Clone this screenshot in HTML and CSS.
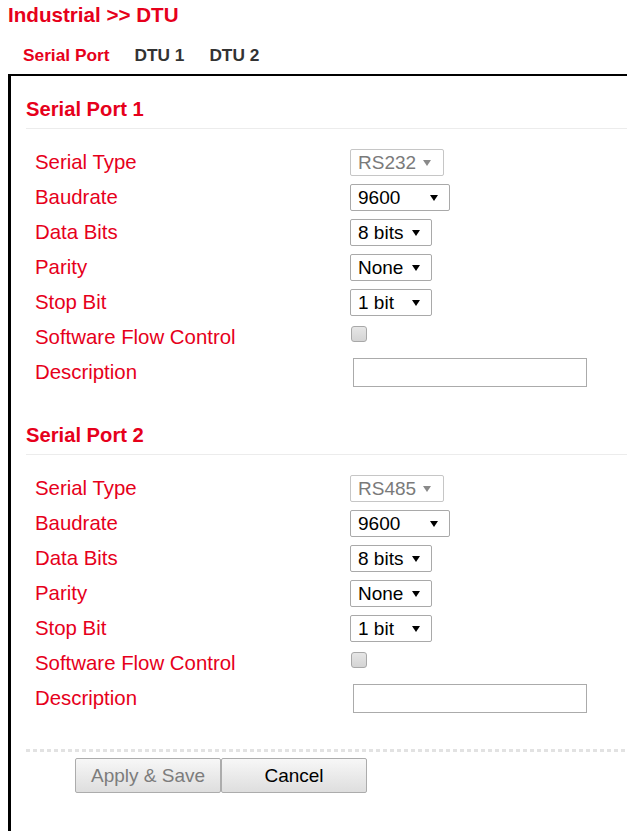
FILE: index.html
```html
<!DOCTYPE html>
<html>
<head>
<meta charset="utf-8">
<title>Industrial &gt;&gt; DTU</title>
<link rel="stylesheet" href="styles.css">
</head>
<body>
<h1 class="title">Industrial &gt;&gt; DTU</h1>
<nav class="tabs">
  <span class="tab active">Serial Port</span>
  <span class="tab">DTU 1</span>
  <span class="tab">DTU 2</span>
</nav>
<div class="panel">
  <section class="section">
    <h2 class="section-title">Serial Port 1</h2>
    <div class="rows">
      <div class="row"><label class="lbl">Serial Type</label><div class="select disabled w94"><span class="val">RS232</span><svg class="arrow" width="8" height="8" viewBox="0 0 8 8"><path d="M0 1H8L4 7Z" fill="#8a8a8a"/></svg></div></div>
      <div class="row"><label class="lbl">Baudrate</label><div class="select w100"><span class="val">9600</span><svg class="arrow" width="8" height="8" viewBox="0 0 8 8"><path d="M0 1H8L4 7Z" fill="#000"/></svg></div></div>
      <div class="row"><label class="lbl">Data Bits</label><div class="select w82"><span class="val">8 bits</span><svg class="arrow" width="8" height="8" viewBox="0 0 8 8"><path d="M0 1H8L4 7Z" fill="#000"/></svg></div></div>
      <div class="row"><label class="lbl">Parity</label><div class="select w82"><span class="val">None</span><svg class="arrow" width="8" height="8" viewBox="0 0 8 8"><path d="M0 1H8L4 7Z" fill="#000"/></svg></div></div>
      <div class="row"><label class="lbl">Stop Bit</label><div class="select w82"><span class="val">1 bit</span><svg class="arrow" width="8" height="8" viewBox="0 0 8 8"><path d="M0 1H8L4 7Z" fill="#000"/></svg></div></div>
      <div class="row"><label class="lbl">Software Flow Control</label><input class="check" type="checkbox" disabled></div>
      <div class="row"><label class="lbl">Description</label><input class="text" type="text"></div>
    </div>
  </section>
  <section class="section">
    <h2 class="section-title">Serial Port 2</h2>
    <div class="rows">
      <div class="row"><label class="lbl">Serial Type</label><div class="select disabled w94"><span class="val">RS485</span><svg class="arrow" width="8" height="8" viewBox="0 0 8 8"><path d="M0 1H8L4 7Z" fill="#8a8a8a"/></svg></div></div>
      <div class="row"><label class="lbl">Baudrate</label><div class="select w100"><span class="val">9600</span><svg class="arrow" width="8" height="8" viewBox="0 0 8 8"><path d="M0 1H8L4 7Z" fill="#000"/></svg></div></div>
      <div class="row"><label class="lbl">Data Bits</label><div class="select w82"><span class="val">8 bits</span><svg class="arrow" width="8" height="8" viewBox="0 0 8 8"><path d="M0 1H8L4 7Z" fill="#000"/></svg></div></div>
      <div class="row"><label class="lbl">Parity</label><div class="select w82"><span class="val">None</span><svg class="arrow" width="8" height="8" viewBox="0 0 8 8"><path d="M0 1H8L4 7Z" fill="#000"/></svg></div></div>
      <div class="row"><label class="lbl">Stop Bit</label><div class="select w82"><span class="val">1 bit</span><svg class="arrow" width="8" height="8" viewBox="0 0 8 8"><path d="M0 1H8L4 7Z" fill="#000"/></svg></div></div>
      <div class="row"><label class="lbl">Software Flow Control</label><input class="check" type="checkbox" disabled></div>
      <div class="row"><label class="lbl">Description</label><input class="text" type="text"></div>
    </div>
  </section>
  <div class="actions">
    <div class="dots"></div>
    <div class="buttons">
      <button class="btn disabled" type="button">Apply &amp; Save</button>
      <button class="btn" type="button">Cancel</button>
    </div>
  </div>
</div>
</body>
</html>
```
FILE: styles.css
```css
html, body {
  margin: 0;
  padding: 0;
  background: #fff;
}
body {
  font-family: "Liberation Sans", Arial, sans-serif;
  color: #000;
  overflow: hidden;
}
.title {
  margin: 0;
  padding: 3px 0 0 8px;
  font-size: 20.6px;
  line-height: 24px;
  font-weight: bold;
  color: #e6001b;
}
.tabs {
  display: flex;
  gap: 25px;
  margin: 18px 0 9px 0;
  padding-left: 23px;
  font-size: 17.3px;
  line-height: 20px;
  font-weight: bold;
}
.tab {
  color: #333;
}
.tab.active {
  color: #e6001b;
}
.panel {
  margin-left: 8px;
  border-left: 3px solid #000;
  border-top: 2px solid #000;
  padding: 0 0 40px 15px;
}
.section-title {
  margin: 21px 0 0 0;
  padding-bottom: 7px;
  border-bottom: 1px solid #ececec;
  font-size: 20.2px;
  line-height: 24px;
  font-weight: bold;
  color: #e6001b;
}
.section + .section .section-title {
  margin-top: 33px;
}
.rows {
  margin-top: 16px;
}
.row {
  display: flex;
  align-items: center;
  height: 35px;
}
.lbl {
  box-sizing: border-box;
  width: 324px;
  padding-left: 9px;
  font-size: 20.4px;
  color: #e6001b;
}
.select {
  box-sizing: border-box;
  height: 27px;
  display: flex;
  align-items: center;
  justify-content: space-between;
  padding: 0 11px 0 7px;
  border: 1px solid #a9a9a9;
  border-radius: 2px;
  background: #fff;
  font-size: 19px;
  color: #000;
}
.select.disabled {
  border-color: #c6c6c6;
  color: #7a7a7a;
  padding-right: 12px;
}
.w94 { width: 94px; }
.w100 { width: 100px; }
.w82 { width: 82px; }
.arrow {
  flex: none;
}
.check {
  appearance: none;
  -webkit-appearance: none;
  box-sizing: border-box;
  width: 16px;
  height: 16px;
  margin: 0 0 7px 1px;
  border: 1px solid #a8a8a8;
  border-radius: 3px;
  background: linear-gradient(#e6e6e6, #d4d4d4);
}
.text {
  box-sizing: border-box;
  width: 234px;
  height: 29px;
  margin: 0 0 0 3px;
  border: 1px solid #ababab;
  border-radius: 0;
  padding: 0 4px;
  background: #fff;
  font-family: "Liberation Sans", Arial, sans-serif;
  font-size: 18px;
}
.actions {
  margin-top: 33px;
}
.dots {
  height: 3px;
  background: repeating-linear-gradient(90deg, #e2e2e2 0 4px, transparent 4px 7px);
}
.buttons {
  display: flex;
  margin: 6px 0 0 49px;
}
.btn {
  box-sizing: border-box;
  width: 146px;
  height: 35px;
  margin: 0;
  border: 1px solid #acacac;
  border-radius: 2px;
  background: linear-gradient(#f7f7f7, #dedede);
  font-family: "Liberation Sans", Arial, sans-serif;
  font-size: 19px;
  color: #000;
  padding: 0;
}
.btn.disabled {
  color: #7c7c7c;
}
```
